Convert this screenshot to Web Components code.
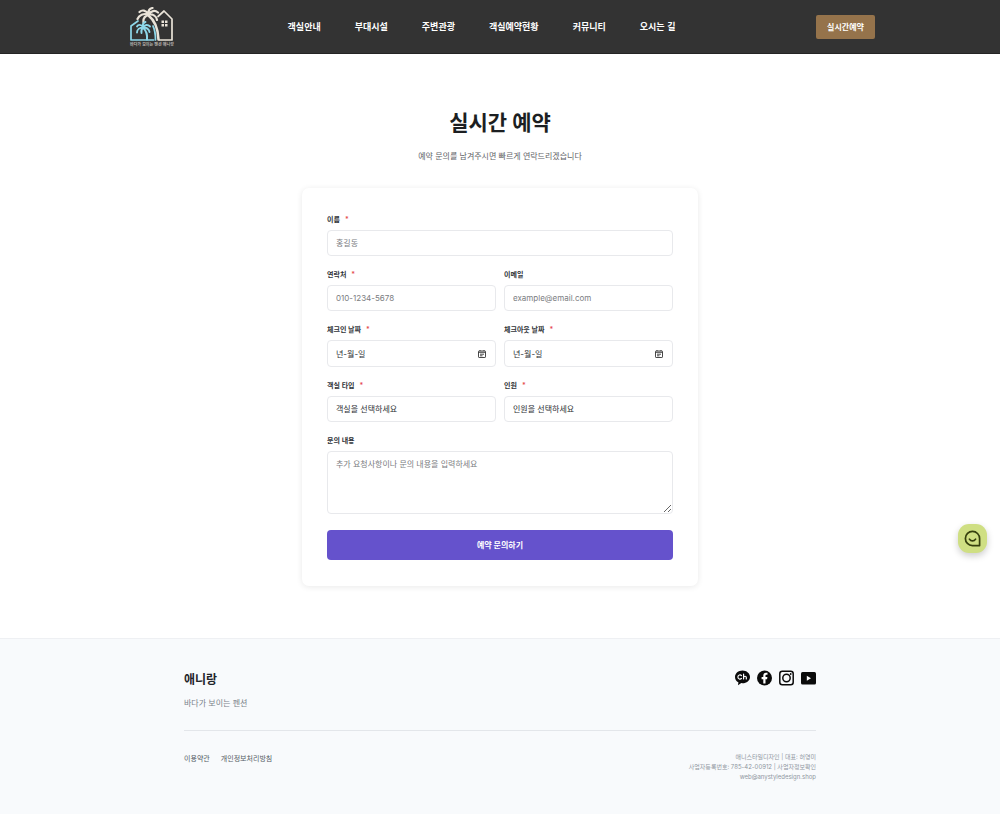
<!DOCTYPE html>
<html lang="ko">
<head>
<meta charset="utf-8">
<meta name="viewport" content="width=device-width, initial-scale=1">
<title>애니랑 - 실시간 예약</title>
<style>
  body {
    margin: 0;
    background: #fff;
    color: #1c1f22;
    font-family: Inter, "Noto Sans CJK KR", sans-serif;
    font-size: 8px;
  }
</style>
</head>
<body>
<reservation-page></reservation-page>

<template id="page-template">
  <style>
    :host { display: flex; flex-direction: column; min-height: 100vh; }
    main { flex: 1; padding: 52px 16px; }
    h1 { margin: 0; font-size: 21px; line-height: 34px; font-weight: 700; text-align: center; }
    .lead { margin: 8px 0 24px; font-size: 8px; line-height: 16px; text-align: center; color: #5f6368; }
  </style>
  <site-header></site-header>
  <main>
    <h1>실시간 예약</h1>
    <p class="lead">예약 문의를 남겨주시면 빠르게 연락드리겠습니다</p>
    <booking-form></booking-form>
  </main>
  <site-footer></site-footer>
  <chat-launcher></chat-launcher>
</template>

<template id="header-template">
  <style>
    :host { display: block; background: #333; border-bottom: 1px solid #242424; font-family: "Noto Sans CJK KR", sans-serif; }
    header { display: grid; grid-template-columns: auto 1fr auto; align-items: center; height: 53px; padding: 0 12.5% 0 13%; }
    nav { display: flex; justify-content: center; gap: 34px; padding-right: 26px; }
    nav a { color: #fff; font-size: 9px; line-height: 16px; font-weight: 700; text-decoration: none; white-space: nowrap; }
    button { width: 59px; height: 24px; padding: 0; border: 0; border-radius: 2px; background: #95734b; color: #fff; font: 700 8px/16px "Noto Sans CJK KR", sans-serif; cursor: pointer; }
  </style>
  <header>
    <brand-logo></brand-logo>
    <nav aria-label="주 메뉴">
      <a href="#rooms">객실안내</a>
      <a href="#facilities">부대시설</a>
      <a href="#tour">주변관광</a>
      <a href="#status">객실예약현황</a>
      <a href="#community">커뮤니티</a>
      <a href="#directions">오시는 길</a>
    </nav>
    <button type="button">실시간예약</button>
  </header>
</template>

<template id="logo-template">
  <style>
    :host { display: block; }
    a { display: block; width: 43px; color: #b9b6b0; text-decoration: none; }
    svg { display: block; width: 43px; height: 35px; }
    span { display: block; font-size: 4px; line-height: 5px; font-weight: 700; white-space: nowrap; }
  </style>
  <a href="#home" aria-label="애니랑 홈">
    <svg viewBox="0 0 43 35" fill="none" stroke-linecap="round" stroke-linejoin="round">
      <g stroke="#e9e3d8">
        <path stroke-width="1.7" d="M28 9.5 34 4l8 8v21H29.5"/>
        <path stroke-width="2.6" d="M18.5 8.5c6.500 5 9.500 13 10 24"/>
        <path stroke-width="2.200" d="M18.500 7.500C16 3 12 2.500 9.500 5M18.500 7.500C13.500 6 9 8 7.500 12M18.500 8C15 9 13 12 13.500 15.500M18.500 7.500C18 4 19.500 1.500 22.500 1M18.500 7.500C21 3.500 25 3 28 5.500M18.500 7.500C23 7 26.500 9 27 13"/>
      </g>
      <path fill="#e9e3d8" d="M31.500 13.500h2.500v2.500h-2.500zM35 13.500h2.500v2.500H35zM31.500 17h2.500v2.500h-2.500zM35 17h2.500v2.500H35z"/>
      <g stroke="#8ed8ea">
        <path stroke-width="1.700" d="M8 14 1 19v14h22.500M23 19c2 4 2.500 8 2.500 14"/>
        <path stroke-width="2" d="M13 20.500c3 3 4.500 7.500 4 12"/>
        <path stroke-width="1.900" d="M13 20C11 17 8 17.500 7 19.500M13 20.500C9.500 20.500 7 22.500 7 25.500M13 20.500C11.500 22 11 24 11.500 26M13 20C12.500 17.500 13.500 15.500 15.500 15M13 20C15 17.500 18 17.500 20 19.500M13 20.500C17 20.500 19 22.500 19.500 25"/>
      </g>
    </svg>
    <span>바다가 보이는 펜션 애니랑</span>
  </a>
</template>

<template id="form-template">
  <style>
    :host { display: block; max-width: 396px; margin: 0 auto; }
    form { display: grid; grid-template-columns: 1fr 1fr; gap: 12px 8px; padding: 25px 25px 26px; border-radius: 7px; background: #fff; box-shadow: 0 1px 6px rgba(0, 0, 0, .09); }
    .wide { grid-column: 1 / -1; }
    button { grid-column: 1 / -1; height: 30px; margin-top: 4px; border: 0; border-radius: 4px; background: #6552cc; color: #fff; font: 700 8px/16px Inter, "Noto Sans CJK KR", sans-serif; cursor: pointer; }
  </style>
  <form>
    <form-field class="wide" kind="text" label="이름" placeholder="홍길동" required></form-field>
    <form-field kind="tel" label="연락처" placeholder="010-1234-5678" required></form-field>
    <form-field kind="email" label="이메일" placeholder="example@email.com"></form-field>
    <form-field kind="date" label="체크인 날짜" placeholder="년-월-일" required></form-field>
    <form-field kind="date" label="체크아웃 날짜" placeholder="년-월-일" required></form-field>
    <form-field kind="select" label="객실 타입" placeholder="객실을 선택하세요" required></form-field>
    <form-field kind="select" label="인원" placeholder="인원을 선택하세요" required></form-field>
    <form-field class="wide" kind="textarea" label="문의 내용" placeholder="추가 요청사항이나 문의 내용을 입력하세요"></form-field>
    <button type="submit">예약 문의하기</button>
  </form>
</template>

<template id="field-template">
  <style>
    :host { display: block; min-width: 0; }
    label { display: flex; gap: 5px; margin-bottom: 3px; font-size: 7px; line-height: 14px; font-weight: 600; color: #303338; }
    .mark { color: #e5484d; }
    .box { display: grid; align-items: center; }
    .box > * { grid-area: 1 / 1; }
    input, select, textarea {
      box-sizing: border-box; width: 100%; height: 26px; margin: 0; padding: 0 8px;
      border: 1px solid #e8e9ec; border-radius: 4px; background: #fff; color: #2c2f33;
      font: 400 8px/12px Inter, "Noto Sans CJK KR", sans-serif; outline: none; appearance: none;
    }
    input::placeholder, textarea::placeholder { color: #7b7d81; opacity: 1; }
    .date { height: 27px; }
    .date::placeholder { color: #2c2f33; }
    textarea { display: block; height: 63px; padding-top: 6px; resize: vertical; }
    .picker { justify-self: end; width: 8px; height: 8px; margin-right: 10px; padding: 0; border: 0; background: none; }
    .picker svg { display: block; width: 8px; height: 8px; }
  </style>
  <label for="control"></label>
  <div class="box"></div>
</template>

<template id="footer-template">
  <style>
    :host { display: block; background: #f8fafc; border-top: 1px solid #eef0f3; }
    footer { max-width: 632px; margin: 0 auto; padding: 31px 16px 32px; }
    .top, .bottom { display: flex; justify-content: space-between; align-items: flex-start; }
    .top { padding-bottom: 20px; border-bottom: 1px solid #e3e6ea; }
    h2 { margin: 0 0 6px; font-size: 12px; line-height: 20px; font-weight: 700; color: #1f2429; }
    p { margin: 0; }
    .tagline { font-size: 8px; line-height: 14px; color: #7b828b; }
    .social { display: flex; gap: 7px; }
    .social a { display: block; color: #0b0b0b; }
    .social svg { display: block; width: 15px; height: 16px; }
    .bottom { padding-top: 21px; }
    .links { display: flex; gap: 11px; padding-top: 1px; }
    .links a { color: #545b64; font-size: 7px; line-height: 12px; text-decoration: none; }
    address { font-size: 6px; line-height: 10px; font-style: normal; text-align: right; color: #8f969f; }
    address a { color: inherit; text-decoration: none; }
  </style>
  <footer>
    <div class="top">
      <div>
        <h2>애니랑</h2>
        <p class="tagline">바다가 보이는 펜션</p>
      </div>
      <div class="social">
        <a href="#kakao" aria-label="카카오톡 채널">
          <svg viewBox="0 0 15 16"><path fill="currentColor" d="M7.500.5C3.400.5 0 3.300 0 6.900c0 2.300 1.400 4.300 3.400 5.400L3 15.200l3.300-2.100 1.200.1c4.100 0 7.500-2.800 7.500-6.300S11.600.5 7.500.5z"/><path fill="none" stroke="#fff" stroke-width="1.200" stroke-linecap="round" d="M6.500 5.600C5.400 4.300 2.900 4.900 2.900 7s2.500 2.700 3.600 1.400M8.600 4.200v4.700M8.600 7.300c.3-1.400 2.700-1.500 2.700.1v1.500"/></svg>
        </a>
        <a href="#facebook" aria-label="페이스북">
          <svg viewBox="0 0 15 16"><circle cx="7.500" cy="8" r="7.500" fill="currentColor"/><path fill="#fff" d="M6.300 13.400V9.300H4.600V7.100h1.700V5.600c0-1.900 1-2.900 2.700-2.900l1.500.1v1.900H9.500c-.8 0-1 .4-1 1v1.400h1.900l-.3 2.200H8.500v4.100z"/></svg>
        </a>
        <a href="#instagram" aria-label="인스타그램">
          <svg viewBox="0 0 15 16" fill="none" stroke="currentColor" stroke-width="1.500"><rect x=".8" y="1.300" width="13.400" height="13.400" rx="2.500"/><circle cx="7.500" cy="8" r="3.700"/><circle cx="11.700" cy="4" r=".9" fill="currentColor" stroke="none"/></svg>
        </a>
        <a href="#youtube" aria-label="유튜브">
          <svg viewBox="0 0 15 16"><rect y="2" width="15" height="12.500" rx="1.500" fill="currentColor"/><path fill="#fff" d="M5.800 5.700v5L10 8.200z"/></svg>
        </a>
      </div>
    </div>
    <div class="bottom">
      <div class="links"><a href="#terms">이용약관</a><a href="#privacy">개인정보처리방침</a></div>
      <address>
        <p>애니스타일디자인 | 대표: 허영미</p>
        <p>사업자등록번호: 785-42-00912 | <a href="#business">사업자정보확인</a></p>
        <p><a href="mailto:web@anystyledesign.shop">web@anystyledesign.shop</a></p>
      </address>
    </div>
  </footer>
</template>

<template id="chat-template">
  <style>
    :host { display: block; position: fixed; right: 13px; bottom: 261px; }
    button { display: grid; place-items: center; width: 29px; height: 29px; padding: 0; border: 0; border-radius: 11px; background: #cfdf83; box-shadow: 0 3px 7px rgba(0, 0, 0, .2); cursor: pointer; }
    svg { display: block; width: 17px; height: 17px; }
  </style>
  <button type="button" aria-label="채팅 상담">
    <svg viewBox="0 0 17 17" fill="none" stroke="#36400e" stroke-width="1.700" stroke-linecap="round" stroke-linejoin="round"><path d="M15.600 15.600H8.400a7.100 7.100 0 1 1 7.200-7.100z"/><path d="M5.400 9.100c1.500 2.400 4.700 2.400 6.200 0"/></svg>
  </button>
</template>

<script>
  class TemplateElement extends HTMLElement {
    constructor() {
      super();
      const template = document.getElementById(this.constructor.templateId);
      this.attachShadow({ mode: 'open' }).append(template.content.cloneNode(true));
    }
  }

  class BrandLogo extends TemplateElement { static templateId = 'logo-template'; }
  class SiteHeader extends TemplateElement { static templateId = 'header-template'; }
  class SiteFooter extends TemplateElement { static templateId = 'footer-template'; }
  class ChatLauncher extends TemplateElement { static templateId = 'chat-template'; }
  class ReservationPage extends TemplateElement { static templateId = 'page-template'; }

  class BookingForm extends TemplateElement {
    static templateId = 'form-template';
    connectedCallback() {
      this.shadowRoot.querySelector('form').addEventListener('submit', event => event.preventDefault());
    }
  }

  const calendarButton = `
    <button class="picker" type="button" aria-label="달력 열기">
      <svg viewBox="0 0 8 8" fill="none" stroke="#333" stroke-width=".9"><rect x=".5" y="1" width="7" height="6.500" rx=".6"/><path d="M.5 2.300h7M2 4.200h4M2 5.800h2.500M2 0v1M6 0v1"/></svg>
    </button>`;

  class FormField extends TemplateElement {
    static templateId = 'field-template';
    connectedCallback() {
      const kind = this.getAttribute('kind');
      const hint = this.getAttribute('placeholder');
      const required = this.hasAttribute('required');
      const label = this.shadowRoot.querySelector('label');
      const box = this.shadowRoot.querySelector('.box');

      label.innerHTML = `<span>${this.getAttribute('label')}</span>${required ? '<span class="mark">*</span>' : ''}`;
      if (kind === 'select') {
        box.innerHTML = `<select id="control"><option value="">${hint}</option></select>`;
      } else if (kind === 'textarea') {
        box.innerHTML = `<textarea id="control" placeholder="${hint}"></textarea>`;
      } else if (kind === 'date') {
        box.innerHTML = `<input id="control" class="date" type="text" placeholder="${hint}">${calendarButton}`;
      } else {
        box.innerHTML = `<input id="control" type="${kind}" placeholder="${hint}">`;
      }
      box.firstElementChild.required = required;
    }
  }

  customElements.define('brand-logo', BrandLogo);
  customElements.define('site-header', SiteHeader);
  customElements.define('form-field', FormField);
  customElements.define('booking-form', BookingForm);
  customElements.define('site-footer', SiteFooter);
  customElements.define('chat-launcher', ChatLauncher);
  customElements.define('reservation-page', ReservationPage);
</script>
</body>
</html>
